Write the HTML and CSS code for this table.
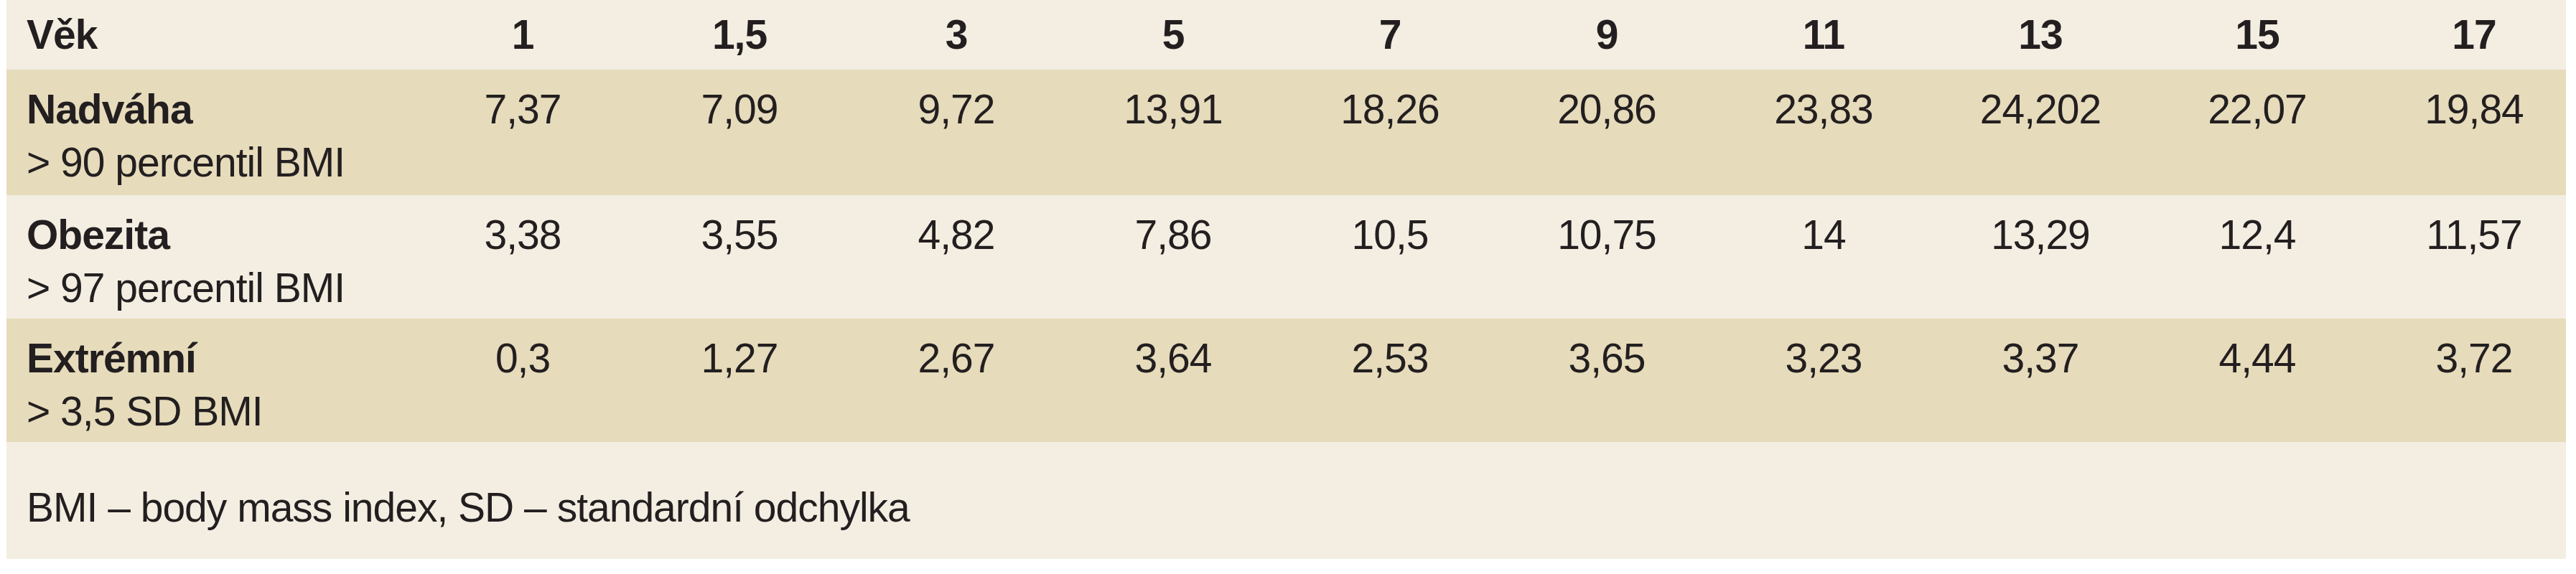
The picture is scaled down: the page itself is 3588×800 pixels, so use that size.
FILE: index.html
```html
<!DOCTYPE html>
<html lang="cs">
<head>
<meta charset="utf-8">
<title>Nadváha a obezita podle věku</title>
<link rel="stylesheet" href="styles.css">
</head>
<body>
<div class="page">
  <table class="bmi">
    <colgroup>
      <col class="c-label">
      <col class="c-val"><col class="c-val"><col class="c-val"><col class="c-val"><col class="c-val">
      <col class="c-val"><col class="c-val"><col class="c-val"><col class="c-val"><col class="c-val">
    </colgroup>
    <thead>
      <tr class="head">
        <th class="label">Věk</th>
        <th>1</th><th>1,5</th><th>3</th><th>5</th><th>7</th>
        <th>9</th><th>11</th><th>13</th><th>15</th><th>17</th>
      </tr>
    </thead>
    <tbody>
      <tr class="band row-first">
        <td class="label"><span class="name">Nadváha</span><span class="crit">&gt; 90 percentil BMI</span></td>
        <td>7,37</td><td>7,09</td><td>9,72</td><td>13,91</td><td>18,26</td>
        <td>20,86</td><td>23,83</td><td>24,202</td><td>22,07</td><td>19,84</td>
      </tr>
      <tr class="plain">
        <td class="label"><span class="name">Obezita</span><span class="crit">&gt; 97 percentil BMI</span></td>
        <td>3,38</td><td>3,55</td><td>4,82</td><td>7,86</td><td>10,5</td>
        <td>10,75</td><td>14</td><td>13,29</td><td>12,4</td><td>11,57</td>
      </tr>
      <tr class="band">
        <td class="label"><span class="name">Extrémní</span><span class="crit">&gt; 3,5 SD BMI</span></td>
        <td>0,3</td><td>1,27</td><td>2,67</td><td>3,64</td><td>2,53</td>
        <td>3,65</td><td>3,23</td><td>3,37</td><td>4,44</td><td>3,72</td>
      </tr>
    </tbody>
    <tfoot>
      <tr class="note">
        <td colspan="11">BMI – body mass index, SD – standardní odchylka</td>
      </tr>
    </tfoot>
  </table>
</div>
</body>
</html>
```

FILE: styles.css
```css
html, body {
  margin: 0;
  padding: 0;
  background: #ffffff;
}

.page {
  margin: 0 14px 0 9px;
  padding-bottom: 23px;
}

.bmi {
  width: 3565px;
  table-layout: fixed;
  border-collapse: collapse;
  border-spacing: 0;
  background: #f3eee1;
  color: #231f20;
  font-family: "Liberation Sans", Arial, sans-serif;
  font-size: 57px;
  line-height: 74px;
  letter-spacing: -1px;
}

.c-label { width: 545px; }
.c-val { width: 302px; }

.bmi th,
.bmi td {
  padding: 0 0 0 46px;
  text-align: center;
  vertical-align: top;
  white-space: nowrap;
}

.bmi th {
  font-weight: bold;
}

.head th {
  padding-top: 11px;
  padding-bottom: 12px;
}

.bmi .label {
  text-align: left;
  padding-left: 28px;
}

.bmi tbody td {
  padding-top: 18px;
  padding-bottom: 6px;
  font-weight: normal;
}

.bmi tbody .row-first td {
  padding-bottom: 9px;
}

.band {
  background: #e6dbbb;
}

.plain {
  background: #f3eee1;
}

.name {
  display: block;
  font-weight: bold;
}

.crit {
  display: block;
  font-weight: normal;
}

.note td {
  text-align: left;
  padding: 54px 0 35px 28px;
}
```
